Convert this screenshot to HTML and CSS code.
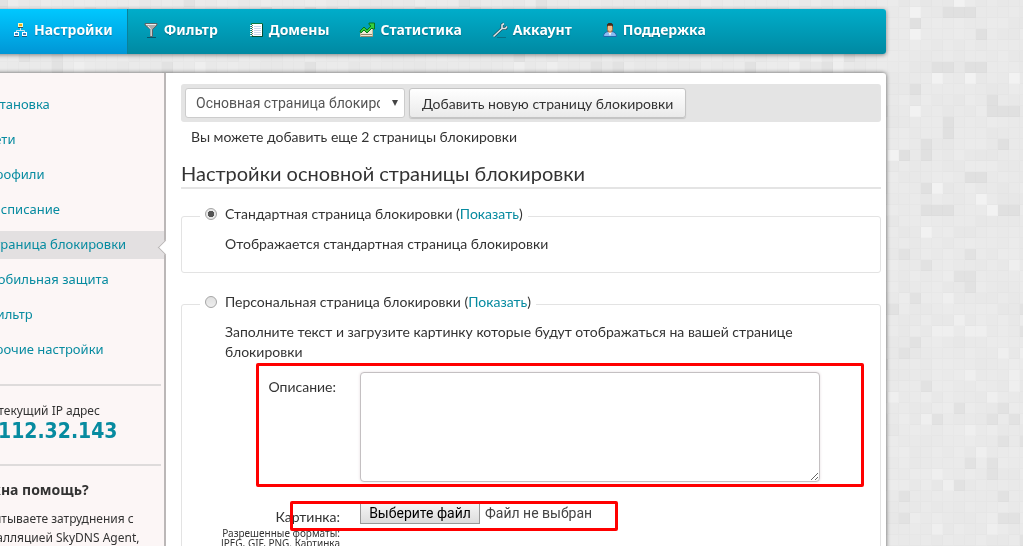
FILE: index.html
```
<!DOCTYPE html>
<html lang="ru">
<head>
<meta charset="utf-8">
<title>Настройки</title>
<link rel="stylesheet" href="styles.css">
</head>
<body>
<svg class="mosaic" id="mosaic" aria-hidden="true"></svg>
<div class="page">
  <nav class="topnav">
    <a class="tab tab-active" href="#">
      <svg class="icon" viewBox="0 0 16 16"><path d="M7.500 5v4M3.500 12V8.500h8V12" fill="none" stroke="#c9e6ee"/><rect x="5.500" y="1.500" width="4" height="3" fill="#e8b410" stroke="#fff3bd"/><path d="M5 5.500h5" stroke="#345561"/><rect x="1.500" y="10.500" width="4" height="3" fill="#3c82c4" stroke="#fff"/><rect x="9.500" y="10.500" width="4" height="3" fill="#3c82c4" stroke="#fff"/><path d="M1 14.500h5M9 14.500h5" stroke="#1b5a7c"/></svg>
      Настройки</a>
    <a class="tab" href="#">
      <svg class="icon" viewBox="0 0 16 16"><path d="M4 15.500h9" stroke="#07566a"/><path d="M2 1.500h12v1.500L9.500 7.500V14.500h-2V7.500L2 3z" fill="#aaa" stroke="#5b6468"/><path d="M3 2.500h10M5 4l3 3.500V14" stroke="#eee" fill="none"/></svg>
      Фильтр</a>
    <a class="tab" href="#">
      <svg class="icon" viewBox="0 0 16 16"><path d="M3.500 1.500h11v13h-11z" fill="#fff" stroke="#087844"/><path d="M14.500 2v12.500H4" fill="none" stroke="#034c34"/><path d="M6 4.500h7M6 6.500h7M6 8.500h7M6 10.500h7M6 12.500h7" stroke="#cbd6ee"/><path d="M2 3.500h3M2 5.500h3M2 7.500h3M2 9.500h3M2 11.500h3M2 13.500h3" stroke="#f5f5f5"/><path d="M4.500 3v11" stroke="#777" stroke-dasharray="1 1"/></svg>
      Домены</a>
    <a class="tab" href="#">
      <svg class="icon" viewBox="0 0 16 16"><path d="M1.500 10l4-3 3 3 5-5v9.500h-12z" fill="#efe9d6" stroke="#c2b99c"/><path d="M2 12.500h11M2 14.500h12" stroke="#93896b"/><path d="M1 9l4-4 3 3 4-4-2-1.500V1h5.500v6H14l-1-1-5 5-3-3-3 3z" fill="#34cf3c" stroke="#09751a"/></svg>
      Статистика</a>
    <a class="tab" href="#">
      <svg class="icon" viewBox="0 0 16 16"><path d="M5 15.500h9" stroke="#087187"/><path d="M1.500 14.500L10 6.500M10 6.500V3l2-1.500M10 6.500h3.500l1.500-2" fill="none" stroke="#18505f" stroke-width="3" stroke-linejoin="round"/><path d="M1.500 14.500L10 6.500M10 6.500V3l2-1.500M10 6.500h3.500l1.500-2" fill="none" stroke="#dce3e5" stroke-width="1.600"/></svg>
      Аккаунт</a>
    <a class="tab" href="#">
      <svg class="icon" viewBox="0 0 16 16"><path d="M1.500 14.500c0-3 2-4.500 4.500-5h4c2.500.5 4.500 2 4.500 5z" fill="#8bbdf2" stroke="#2468aa"/><path d="M6 9h4l-2 5z" fill="#fff"/><path d="M5.500 3.500h5v4L9.500 10h-3l-1-2.500z" fill="#f0bd8c" stroke="#a66b3c"/><path d="M5 5V2.500L6.500 1h3L11 2.500V5l-1-1.500H6z" fill="#43291b"/></svg>
      Поддержка</a>
  </nav>

  <div class="panel">
    <aside class="sidebar">
      <ul class="menu">
        <li><a href="#">Установка</a></li>
        <li><a href="#">Сети</a></li>
        <li><a href="#">Профили</a></li>
        <li><a href="#">Расписание</a></li>
        <li class="current"><a href="#">Страница блокировки</a></li>
        <li><a href="#">Мобильная защита</a></li>
        <li><a href="#">Фильтр</a></li>
        <li><a href="#">Прочие настройки</a></li>
      </ul>
      <div class="ip-box">
        <div class="ip-label">Ваш текущий IP адрес</div>
        <strong class="ip">112.32.143</strong>
      </div>
      <div class="help">
        <h2>Нужна помощь?</h2>
        <p>Испытываете затруднения с<br>инсталляцией SkyDNS Agent,</p>
      </div>
    </aside>

    <main class="content">
      <div class="toolbar">
        <div class="select-wrap">
          <select aria-label="Страница блокировки"><option>Основная страница блокировки</option></select>
          <span class="arrow"></span>
        </div>
        <button class="add" type="button">Добавить новую страницу блокировки</button>
      </div>
      <p class="note">Вы можете добавить еще 2 страницы блокировки</p>
      <h1>Настройки основной страницы блокировки</h1>

      <fieldset>
        <legend><input type="radio" name="kind" id="std" checked><label for="std">Стандартная страница блокировки</label>&nbsp;(<a href="#">Показать</a>)</legend>
        <p>Отображается стандартная страница блокировки</p>
      </fieldset>

      <fieldset>
        <legend><input type="radio" name="kind" id="own"><label for="own">Персональная страница блокировки</label>&nbsp;(<a href="#">Показать</a>)</legend>
        <p>Заполните текст и загрузите картинку которые будут отображаться на вашей странице блокировки</p>
        <div class="row">
          <div class="caption"><label for="desc">Описание:</label></div>
          <textarea id="desc"></textarea>
          <span class="mark mark-text"></span>
        </div>
        <div class="row">
          <div class="caption caption-file"><label for="pic">Картинка:</label><small>Разрешенные форматы: JPEG, GIF, PNG. Картинка</small></div>
          <div class="file"><input type="file" id="pic"><label class="file-button" for="pic">Выберите файл</label><span>Файл не выбран</span></div>
          <span class="mark mark-file"></span>
        </div>
      </fieldset>
    </main>
  </div>
</div>
<script src="mosaic.js"></script>
</body>
</html>
```
FILE: styles.css
```
* { box-sizing: border-box; }

body {
  margin: 0;
  height: 100vh;
  overflow: hidden;
  background: #e9e9e9;
  color: #333;
  font: 13px/20px "Noto Sans", "Open Sans", sans-serif;
}

a { color: #078ba0; text-decoration: none; }
p, h1, h2, ul { margin: 0; padding: 0; }

.mosaic { position: fixed; inset: 0; width: 100%; height: 100%; z-index: -1; }

.page { margin: 9px 137px 0 -30px; }

.topnav {
  display: flex;
  height: 45px;
  padding-left: 27px;
  border-radius: 3px;
  background: linear-gradient(#00adca, #0089a2);
  box-shadow: 0 1px 4px rgba(0, 0, 0, .45);
}
.tab {
  display: flex;
  align-items: center;
  gap: 5px;
  padding: 0 14px 3px 16px;
  color: #fff;
  font-size: 14px;
  font-weight: bold;
  text-shadow: 0 1px 1px rgba(0, 50, 70, .4);
}
.tab-active {
  background: linear-gradient(#00c8ff, #0096d6);
  box-shadow: 1px 0 0 #0c8198;
}
.icon { width: 16px; height: 16px; flex: none; }

.panel {
  display: flex;
  margin-top: 19px;
  border-radius: 3px;
  background: #fff;
  box-shadow: 0 0 4px rgba(0, 0, 0, .6);
}

.sidebar {
  flex: none;
  width: 196px;
  padding-top: 18px;
  background: #fcf6f6;
  border-right: 2px solid #bbb7b7;
}
.menu { list-style: none; display: grid; gap: 7px; }
.menu li { position: relative; height: 28px; padding-left: 16px; line-height: 26px; white-space: nowrap; }
.menu .current { background: #e3e0e1; }
.current::after {
  content: "";
  position: absolute;
  right: -7px;
  top: 11px;
  width: 10px;
  height: 10px;
  background: #fff;
  border: solid #bbb7b7;
  border-width: 0 0 1px 1px;
  transform: rotate(45deg);
}
.ip-box, .help { margin-right: 3px; border-top: 2px solid #dedbdb; white-space: nowrap; }
.ip-box { margin-top: 20px; padding: 15px 0 23px; font-size: 12px; }
.ip { display: block; padding-left: 28px; color: #078ba0; font: bold 21px/20px "DejaVu Sans Condensed", "DejaVu Sans", sans-serif; }
.help { padding-top: 14px; font-size: 12px; line-height: 19px; }
.help h2 { margin-bottom: 9px; font-size: 14px; line-height: 20px; }

.content { flex: 1; min-width: 0; padding: 11px 5px 20px 15px; font-family: Lato, sans-serif; font-size: 14px; }

.toolbar { display: flex; gap: 4px; padding: 4px; background: #e4e4e4; border-radius: 3px; }
.select-wrap { position: relative; }
select {
  appearance: none;
  display: block;
  width: 220px;
  height: 30px;
  padding: 0 24px 0 10px;
  border: 1px solid #ccc;
  border-radius: 3px;
  background: #fff;
  color: #555;
  font: 14px Roboto, sans-serif;
}
.arrow {
  position: absolute;
  right: 7px;
  top: 12px;
  border: solid transparent;
  border-width: 6px 3px 0;
  border-top-color: #444;
  pointer-events: none;
}
.add {
  height: 30px;
  padding: 0 12px;
  border: 1px solid #c4c4c4;
  border-radius: 3px;
  background: linear-gradient(#fff, #eaeaea);
  box-shadow: 0 1px 1px rgba(0, 0, 0, .15);
  color: #333;
  font: 14px Lato, sans-serif;
}
.note { margin-top: 5px; padding-left: 10px; }
h1 {
  margin-top: 12px;
  border-bottom: 2px solid #e4e4e4;
  font-size: 20px;
  font-weight: normal;
  line-height: 28px;
}

fieldset { min-width: 0; margin: 15px 0 19px; padding: 6px 43px 18px; border: 1px solid #e3e3e3; border-radius: 3px; }
legend { display: flex; align-items: center; height: 24px; margin-left: -25px; padding: 0 5px 4px; }
input[type="radio"] {
  appearance: none;
  width: 12px;
  height: 12px;
  margin: 0 8px 0 0;
  border: 1px solid #a5a5a5;
  border-radius: 50%;
  background: linear-gradient(#e0e0e0, #eee);
}
input[type="radio"]:checked { background: radial-gradient(circle, #555 0 3px, #e8e8e8 3px); }

.row { position: relative; display: flex; gap: 20px; margin: 10px 0 21px; }
.caption { width: 115px; padding: 5px 4px 0 0; text-align: right; }
.caption-file { width: 125px; margin-left: -10px; padding: 4px 0 0; }
.caption small { display: block; margin-top: 1px; font: 10px/10px "Noto Sans", sans-serif; }
textarea {
  width: 460px;
  height: 110px;
  border: 1px solid #c4c0c2;
  border-radius: 4px;
  background: #fff;
  box-shadow: 0 0 3px #e6dcdf;
  resize: both;
}
.file { display: flex; gap: 5px; height: 21px; color: #444; font: 14px/20px Roboto, sans-serif; }
.file input { position: absolute; width: 1px; height: 1px; opacity: 0; }
.file-button { width: 120px; border: 1px solid #999; background: linear-gradient(#f4f4f4, #ddd); color: #000; line-height: 19px; text-align: center; }

.mark { position: absolute; border: 3px solid #f00; border-radius: 2px; pointer-events: none; }
.mark-text { left: 31px; right: -27px; top: -9px; height: 124px; }
.mark-file { left: 65px; width: 328px; top: -2px; height: 30px; }
```
FILE: mosaic.js
```
// Background of 11px tiles: a fixed list of accents near the right edge, soft noise elsewhere.
const svg = document.getElementById('mosaic');
const size = 11, x0 = 888, y0 = 7;
const light = '2,0 6,-1 2,2 7,6 11,6 4,6 2,9 0,13 4,16 8,17 9,18 3,20'.split(' ');
const dark = '2,1 5,0 6,0 7,0 8,2 4,5 5,5 7,5 8,5 2,7 9,8 9,9 10,9 11,9 5,10 5,11 3,12 3,13 10,12 1,13 7,15 8,15 3,16 3,18 4,18 5,18 10,18 11,18'.split(' ');
let seed = 7;
const next = () => (seed = (seed * 16807) % 2147483647) / 2147483647;
let out = '';
for (let r = -1; y0 + r * size < innerHeight; r++) {
  for (let c = -81; x0 + c * size < innerWidth; c++) {
    const key = c + ',' + r;
    const n = next();
    let v = 231 + Math.round(n * 5);
    if (n > 0.94) v = 239;
    if (n < 0.07) v = 226;
    if (r < 21 && c >= 0) v = light.includes(key) ? 242 : dark.includes(key) ? 224 : 231 + Math.round(n * 4);
    const s = v - 3;
    out += `<rect x="${x0 + c * size}" y="${y0 + r * size}" width="11" height="11" fill="rgb(${s},${s},${s})"/>` +
      `<rect x="${x0 + c * size}" y="${y0 + r * size}" width="10" height="10" fill="rgb(${v},${v},${v})"/>`;
  }
}
svg.innerHTML = out;
```
